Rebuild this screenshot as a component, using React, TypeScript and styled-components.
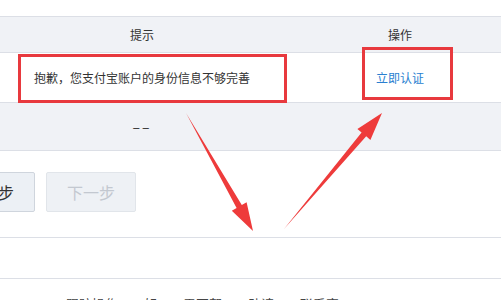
import React from 'react';
import styled, { createGlobalStyle } from 'styled-components';

const GlobalStyle = createGlobalStyle`
  html, body {
    margin: 0;
    padding: 0;
    background: #fff;
    overflow: hidden;
  }
  body {
    font-family: "Noto Sans CJK SC", "Liberation Sans", sans-serif;
  }
`;

const Page = styled.div`
  position: relative;
  width: 501px;
  height: 300px;
  overflow: hidden;
  background: #fff;
  padding-top: 16px;
  box-sizing: border-box;
`;

const Table = styled.div`
  width: 540px;
  border-top: 1px solid #dcdfe6;
`;

const Row = styled.div<{ $bg: string; $height: number }>`
  display: grid;
  grid-template-columns: 284px 232px;
  height: ${({ $height }) => $height}px;
  background: ${({ $bg }) => $bg};
  border-bottom: 1px solid #dcdfe6;
  align-items: center;
`;

const Cell = styled.div<{ $color?: string }>`
  text-align: center;
  font-size: 12px;
  line-height: 16px;
  color: ${({ $color }) => $color || '#333'};
  white-space: nowrap;
`;

const Placeholder = styled.span`
  font-size: 14px;
  letter-spacing: 2px;
  color: #333;
`;

const ButtonBar = styled.div`
  display: flex;
  gap: 11px;
  margin-left: -55px;
  padding: 21px 0 25px;
`;

const StepButton = styled.button<{ $disabled?: boolean }>`
  width: 90px;
  height: 40px;
  box-sizing: border-box;
  border: 1px solid ${({ $disabled }) => ($disabled ? '#e1e5ea' : '#cfd5dd')};
  border-radius: 2px;
  background: ${({ $disabled }) => ($disabled ? '#eef1f5' : '#ecf0f5')};
  color: ${({ $disabled }) => ($disabled ? '#c3c8d0' : '#333')};
  font-family: inherit;
  font-size: 16px;
  padding: 0;
`;

const Section = styled.div`
  height: 40px;
  border-top: 1px solid #dcdfe6;
  border-bottom: 1px solid #dcdfe6;
`;

const Footer = styled.div`
  display: flex;
  gap: 26px;
  padding: 17px 0 0 66px;
  font-size: 13px;
  line-height: 16px;
  color: #444;
  white-space: nowrap;
`;

const RedBox = styled.div<{ $left: number; $top: number; $w: number; $h: number }>`
  position: absolute;
  left: ${({ $left }) => $left}px;
  top: ${({ $top }) => $top}px;
  width: ${({ $w }) => $w}px;
  height: ${({ $h }) => $h}px;
  box-sizing: border-box;
  border: 3px solid #e8393e;
  pointer-events: none;
`;

const Overlay = styled.svg`
  position: absolute;
  left: 0;
  top: 0;
  pointer-events: none;
`;

const App: React.FC = () => {
  return (
    <>
      <GlobalStyle />
      <Page>
        <Table>
          <Row $bg="#f0f2f6" $height={35}>
            <Cell>提示</Cell>
            <Cell>操作</Cell>
          </Row>
          <Row $bg="#fff" $height={49}>
            <Cell>抱歉，您支付宝账户的身份信息不够完善</Cell>
            <Cell $color="#2a7fd0">立即认证</Cell>
          </Row>
          <Row $bg="#f0f2f6" $height={47}>
            <Cell>
              <Placeholder>––</Placeholder>
            </Cell>
            <Cell />
          </Row>
        </Table>
        <ButtonBar>
          <StepButton>上一步</StepButton>
          <StepButton $disabled>下一步</StepButton>
        </ButtonBar>
        <Section />
        <Footer>
          <span>跟踪操作</span>
          <span>如</span>
          <span>需要帮</span>
          <span>助请</span>
          <span>联系客</span>
        </Footer>
        <RedBox $left={18} $top={54} $w={269} $h={49} />
        <RedBox $left={362} $top={47} $w={91} $h={53} />
        <Overlay width="501" height="300" viewBox="0 0 501 300">
          <polygon
            fill="#ee3b3b"
            points="186,113 241.8,205.1 246.6,202.3 253,231 231.8,210.8 236.6,208.1"
          />
          <polygon
            fill="#ee3b3b"
            points="284,229 361.6,132.5 357.4,128.9 382,113 370.4,139.9 366.2,136.3"
          />
        </Overlay>
      </Page>
    </>
  );
};

export default App;
